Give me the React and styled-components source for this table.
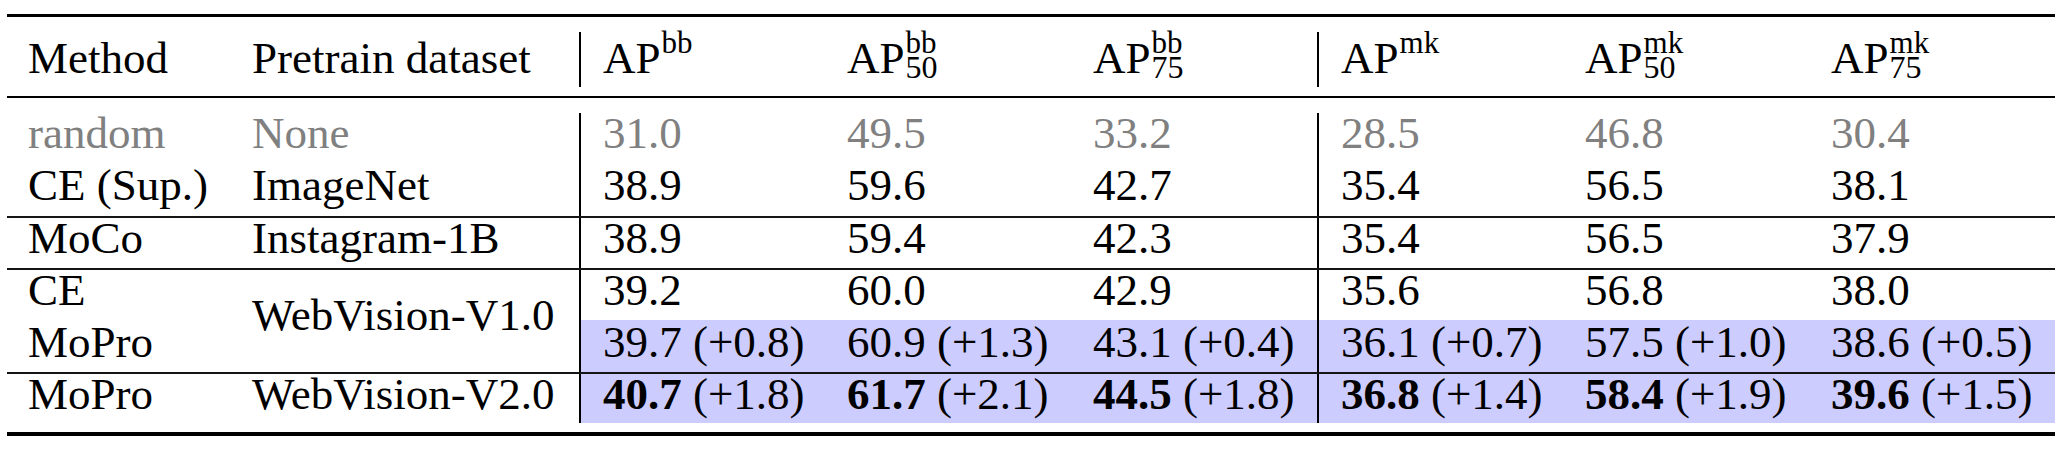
import React from "react";
import styled, { createGlobalStyle } from "styled-components";

const GlobalStyle = createGlobalStyle`
  html, body {
    margin: 0;
    padding: 0;
    background: #fff;
  }
  body {
    font-family: "Liberation Serif", "Times New Roman", Tinos, "DejaVu Serif", serif;
    color: #000;
  }
`;

const headers = [
  { sup: "bb" },
  { sup: "bb", sub: "50" },
  { sup: "bb", sub: "75" },
  { sup: "mk" },
  { sup: "mk", sub: "50" },
  { sup: "mk", sub: "75" },
];

// each block is a group of rows between two horizontal rules
const blocks = [
  [
    { method: "random", dataset: "None", muted: true, pt: 0, pb: 12, vals: ["31.0", "49.5", "33.2", "28.5", "46.8", "30.4"] },
    { method: "CE (Sup.)", dataset: "ImageNet", pt: 0, pb: 11, vals: ["38.9", "59.6", "42.7", "35.4", "56.5", "38.1"] },
  ],
  [
    { method: "MoCo", dataset: "Instagram-1B", pt: 0, pb: 10, vals: ["38.9", "59.4", "42.3", "35.4", "56.5", "37.9"] },
  ],
  [
    { method: "CE", dataset: "WebVision-V1.0", span: true, pt: 0, pb: 10, vals: ["39.2", "60.0", "42.9", "35.6", "56.8", "38.0"] },
    {
      method: "MoPro", pt: 2, pb: 10, hl: true,
      vals: [["39.7", "(+0.8)"], ["60.9", "(+1.3)"], ["43.1", "(+0.4)"], ["36.1", "(+0.7)"], ["57.5", "(+1.0)"], ["38.6", "(+0.5)"]],
    },
  ],
  [
    {
      method: "MoPro", dataset: "WebVision-V2.0", pt: 0, pb: 9, hl: true, bold: true,
      vals: [["40.7", "(+1.8)"], ["61.7", "(+2.1)"], ["44.5", "(+1.8)"], ["36.8", "(+1.4)"], ["58.4", "(+1.9)"], ["39.6", "(+1.5)"]],
    },
  ],
];

const isSep = (i) => i === 0 || i === 3;

function Value({ v, bold }) {
  if (typeof v === "string") return v;
  return (
    <>
      {bold ? <Strong>{v[0]}</Strong> : v[0]} {v[1]}
    </>
  );
}

function Row({ row }) {
  return (
    <>
      <Cell $pt={row.pt} $pb={row.pb} $pl={21} $muted={row.muted}>
        {row.method}
      </Cell>
      {row.span ? (
        <SpanCell>{row.dataset}</SpanCell>
      ) : row.dataset ? (
        <Cell $pt={row.pt} $pb={row.pb} $pl={21} $muted={row.muted}>
          {row.dataset}
        </Cell>
      ) : null}
      {row.vals.map((v, i) => (
        <Cell key={i} $pt={row.pt} $pb={row.pb} $pl={22} $sep={isSep(i)} $hl={row.hl} $muted={row.muted}>
          <Value v={v} bold={row.bold} />
        </Cell>
      ))}
    </>
  );
}

export default function App() {
  return (
    <Page>
      <GlobalStyle />
      <Table>
        <Rule $h={3} $mb={15} />
        <Cell $pt={6} $pb={9} $pl={21}>Method</Cell>
        <Cell $pt={6} $pb={9} $pl={21}>Pretrain dataset</Cell>
        {headers.map((h, i) => (
          <Cell key={i} $pt={6} $pb={9} $pl={22} $sep={isSep(i)}>
            AP
            <Scripts>
              <Sup>{h.sup}</Sup>
              {h.sub && <Sub>{h.sub}</Sub>}
            </Scripts>
          </Cell>
        ))}
        <Rule $h={2} $mt={9} $mb={15} />
        {blocks.map((block, b) => (
          <React.Fragment key={b}>
            {b > 0 && <Rule $h={2} $c="#151515" />}
            {block.map((row, r) => (
              <Row key={r} row={row} />
            ))}
          </React.Fragment>
        ))}
        <Rule $h={4} $mt={9} />
      </Table>
    </Page>
  );
}

const Page = styled.div`
  padding: 14px 0 0 7px;
`;

const Table = styled.div`
  display: grid;
  grid-template-columns: 224px 348px repeat(6, 246px);
  width: 2048px;
  font-family: "Liberation Serif", "Times New Roman", Tinos, "DejaVu Serif", serif;
  font-size: 45px;
`;

const Rule = styled.div`
  grid-column: 1 / -1;
  height: ${(p) => p.$h}px;
  margin: ${(p) => p.$mt || 0}px 0 ${(p) => p.$mb || 0}px;
  background: ${(p) => p.$c || "#000"};
`;

const Cell = styled.div`
  box-sizing: border-box;
  line-height: 40px;
  white-space: nowrap;
  padding: ${(p) => p.$pt}px 0 ${(p) => p.$pb}px ${(p) => p.$pl}px;
  color: ${(p) => (p.$muted ? "#808080" : "#000")};
  background: ${(p) => (p.$hl ? "#ccccff" : "transparent")};
  border-left: ${(p) => (p.$sep ? "2px solid #000" : "none")};
`;

const SpanCell = styled.div`
  grid-row: span 2;
  align-self: start;
  line-height: 40px;
  white-space: nowrap;
  padding: 25px 0 0 21px;
`;

const Strong = styled.span`
  font-weight: 700;
`;

const Scripts = styled.span`
  display: inline-flex;
  flex-direction: column;
  font-size: 31px;
  line-height: 25px;
  vertical-align: 20px;
  margin: -14px 0 -26px 1px;
`;

const Sup = styled.span`
  line-height: 25px;
`;

const Sub = styled.span`
  line-height: 25px;
  font-size: 32px;
`;
